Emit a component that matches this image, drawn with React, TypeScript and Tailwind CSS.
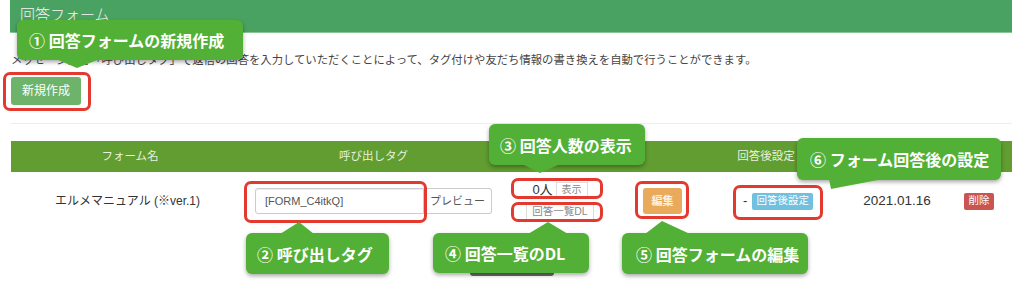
import React from "react"

type Box = { className: string }

// red annotation frame that sits over the page
function Frame({ className }: Box) {
  return <div className={`absolute rounded-[7px] border-[3px] border-[#e3392e] ${className}`} />
}

function Callout({ className, text }: { className: string; text: string }) {
  return (
    <div
      className={`absolute flex items-center rounded-[6px] bg-[#52b036] font-['Noto_Sans_CJK_JP',sans-serif] text-[16px] font-bold leading-none text-white shadow-[0_2px_4px_rgba(0,0,0,0.35)] ${className}`}
    >
      {text}
    </div>
  )
}

const cols = "grid grid-cols-[238px_249px_124px_81px_126px_136px_28px_19px]"

export default function App() {
  return (
    <div className="relative flex h-[306px] w-[1024px] flex-col items-start overflow-hidden bg-white font-['Liberation_Sans','Noto_Sans_CJK_JP',sans-serif] text-[#333]">
      <div className="ml-[10px] h-[33px] w-[1002px] border-b border-[#86c795] bg-[#4aa262] pl-[10px] pt-[6px] text-[15px] font-light leading-[18px] text-[#f4f4f4]">
        回答フォーム
      </div>

      <p className="ml-[11px] mt-[19px] whitespace-nowrap text-[11.35px] leading-[16px] text-[#444]">
        メッセージ内で「呼び出しタグ」で返信の回答を入力していただくことによって、タグ付けや友だち情報の書き換えを自動で行うことができます。
      </p>

      <button className="ml-[11px] mt-[9px] h-[28px] w-[70px] rounded-[3px] bg-[#6db46a] text-[12px] text-white">
        新規作成
      </button>

      <div className="ml-[11px] mt-[18px] h-px w-[1001px] bg-[#eeeeee]" />

      <div className="ml-[11px] mt-[17px] w-[1001px]">
        <div className={`${cols} h-[31px] items-center bg-[#619d31] text-center text-[11.5px] text-[#e9f1df]`}>
          <span>フォーム名</span>
          <span>呼び出しタグ</span>
          <span />
          <span />
          <span>回答後設定</span>
          <span />
          <span />
          <span />
        </div>

        <div className={`${cols} h-[58px] items-center`}>
          <div className="pr-[5px] text-center text-[12px]">エルメマニュアル (※ver.1)</div>

          <div className="flex justify-center">
            <div className="flex h-[26px] w-[169px] items-center rounded-l-[3px] border border-[#cccccc] pl-[9px] text-[11px] text-[#555] shadow-[inset_0_1px_1px_rgba(0,0,0,0.08)]">
              [FORM_C4itkQ]
            </div>
            <div className="flex h-[26px] w-[68px] items-center justify-center rounded-r-[3px] border border-l-0 border-[#cccccc] text-[11px] text-[#555]">
              プレビュー
            </div>
          </div>

          <div className="flex flex-col items-center gap-[6px]">
            <div className="flex items-center gap-[3px]">
              <span className="text-[13px] leading-none">0人</span>
              <span className="flex h-[16px] items-center border border-[#dddddd] px-[5px] text-[10px] text-[#8a8a8a]">表示</span>
            </div>
            <span className="flex h-[17px] items-center border border-[#dddddd] px-[5px] text-[10.5px] text-[#8a8a8a]">回答一覧DL</span>
          </div>

          <div className="flex justify-center">
            <span className="flex h-[26px] w-[39px] items-center justify-center rounded-[3px] bg-[#e9ab5b] text-[11px] font-bold text-[#fdf1e0]">
              編集
            </span>
          </div>

          <div className="flex items-center gap-[5px] pl-[40px]">
            <span className="text-[13px]">-</span>
            <span className="flex h-[17px] w-[61px] items-center justify-center rounded-[2px] bg-[#6fc1df] text-[10.5px] text-white">
              回答後設定
            </span>
          </div>

          <div className="text-center text-[13.5px]">2021.01.16</div>

          <div className="flex justify-center">
            <span className="flex h-[17px] w-[30px] shrink-0 items-center justify-center rounded-[2px] bg-[#ca5450] text-[10.5px] text-white">
              削除
            </span>
          </div>
          <span />
        </div>
      </div>

      {/* annotation layer */}
      <Frame className="left-[3px] top-[72px] h-[39px] w-[88px]" />
      <Frame className="left-[244px] top-[181px] h-[42px] w-[183px]" />
      <Frame className="left-[511px] top-[178px] h-[21px] w-[92px]" />
      <Frame className="left-[511px] top-[202px] h-[20px] w-[92px]" />
      <Frame className="left-[635px] top-[181px] h-[38px] w-[54px]" />
      <Frame className="left-[733px] top-[185px] h-[35px] w-[90px]" />

      <div className="absolute left-[470px] top-[266px] h-[10px] w-[84px] rounded-[3px] bg-[#6a6a6a]" />

      <Callout className="left-[17px] top-[20px] h-[40px] w-[226px] pl-[12px]" text="① 回答フォームの新規作成" />
      <Callout className="left-[246px] top-[233px] h-[41px] w-[143px] pl-[11px]" text="② 呼び出しタグ" />
      <Callout className="left-[489px] top-[124px] h-[41px] w-[156px] pl-[11px]" text="③ 回答人数の表示" />
      <Callout className="left-[433px] top-[233px] h-[40px] w-[156px] pl-[12px]" text="④ 回答一覧のDL" />
      <Callout className="left-[622px] top-[233px] h-[41px] w-[186px] pl-[14px]" text="⑤ 回答フォームの編集" />
      <Callout className="left-[797px] top-[138px] h-[42px] w-[204px] pl-[13px]" text="⑥ フォーム回答後の設定" />

      <svg className="pointer-events-none absolute left-0 top-0" width="1024" height="306" viewBox="0 0 1024 306">
        <g fill="#52b036">
          <polygon points="56,59 77,68 100,59" />
          <polygon points="280,234 299,222 314,234" />
          <polygon points="522,164 540,173 560,164" />
          <polygon points="528,234 548,222 568,234" />
          <polygon points="645,234 662,221 690,234" />
          <polygon points="829,179 831,189 883,179" />
        </g>
      </svg>
    </div>
  )
}
